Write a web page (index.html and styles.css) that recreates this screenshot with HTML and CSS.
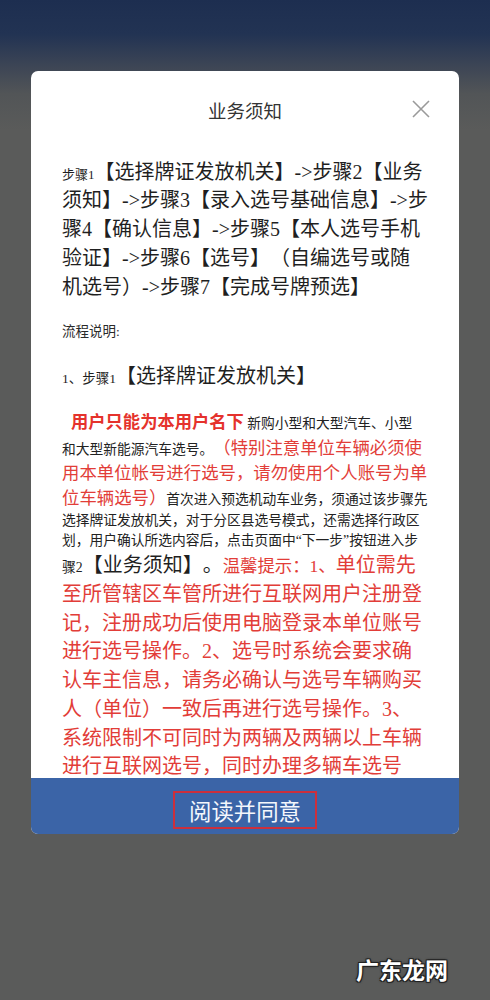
FILE: index.html
```html
<!DOCTYPE html>
<html lang="zh-CN">
<head>
<meta charset="utf-8">
<title>业务须知</title>
<link rel="stylesheet" href="styles.css">
</head>
<body>
<div class="screen">
  <section class="modal">
    <header class="modal-head">
      <h2 class="modal-title">业务须知</h2>
      <button class="close" aria-label="关闭">
        <svg viewBox="0 0 20 20" width="20" height="20"><path d="M2 2 L18 18 M18 2 L2 18" /></svg>
      </button>
    </header>
    <div class="modal-body">
      <p class="steps"><span class="sm">步骤1</span>【选择牌证发放机关】-&gt;步骤2【业务<br>须知】-&gt;步骤3【录入选号基础信息】-&gt;步<br>骤4【确认信息】-&gt;步骤5【本人选号手机<br>验证】-&gt;步骤6【选号】（自编选号或随<br>机选号）-&gt;步骤7【完成号牌预选】</p>
      <p class="note">流程说明:</p>
      <p class="step-title"><span class="sm">1、步骤1</span>【选择牌证发放机关】</p>
      <p class="detail"><b class="hl">用户只能为本用户名下</b> 新购小型和大型汽车、小型<br>和大型新能源汽车选号。<span class="red-m">（特别注意单位车辆必须使<br>用本单位帐号进行选号，请勿使用个人账号为单<br>位车辆选号）</span>首次进入预选机动车业务，须通过该步骤先<br>选择牌证发放机关，对于分区县选号模式，还需选择行政区<br>划，用户确认所选内容后，点击页面中“下一步”按钮进入步<br>骤2<span class="blk-l">【业务须知】。</span><span class="red-m">温馨提示：1、</span><span class="red-l">单位需先<br>至所管辖区车管所进行互联网用户注册登<br>记，注册成功后使用电脑登录本单位账号<br>进行选号操作。2、选号时系统会要求确<br>认车主信息，请务必确认与选号车辆购买<br>人（单位）一致后再进行选号操作。3、<br>系统限制不可同时为两辆及两辆以上车辆<br>进行互联网选号，同时办理多辆车选号</span></p>
    </div>
    <footer class="modal-foot">
      <button class="agree">阅读并同意</button>
    </footer>
  </section>
</div>
<div class="watermark">广东龙网</div>
</body>
</html>
```
FILE: styles.css
```css
* { box-sizing: border-box; }

html, body {
  margin: 0;
  padding: 0;
}

body {
  width: 490px;
  height: 1000px;
  overflow: hidden;
  position: relative;
  font-family: "Liberation Serif", "Noto Sans CJK SC", serif;
  background: linear-gradient(180deg, #1d2e50 0px, #223353 34px, #3b4455 64px, #525557 94px, #5a5b5a 130px, #5a5b5a 1000px);
  text-spacing-trim: space-all;
}

.screen {
  padding-top: 71px;
}

.modal {
  margin: 0 31px;
  height: 763px;
  background: #fff;
  border-radius: 7px;
  overflow: hidden;
  display: flex;
  flex-direction: column;
}

.modal-head {
  flex: none;
  height: 78px;
  display: grid;
  grid-template-columns: 1fr auto 1fr;
  align-items: center;
  padding-right: 28px;
  padding-left: 28px;
}

.modal-title {
  grid-column: 2;
  margin: 0;
  font-family: "Noto Sans CJK SC", sans-serif;
  font-weight: 400;
  font-size: 18.5px;
  line-height: 1;
  color: #333;
}

.close {
  grid-column: 3;
  justify-self: end;
  width: 20px;
  height: 20px;
  margin-top: -2px;
  padding: 0;
  border: 0;
  background: none;
  display: flex;
}

.close svg path {
  stroke: #9a9a9a;
  stroke-width: 1.6;
  fill: none;
}

.modal-body {
  flex: 1;
  overflow: hidden;
  padding: 8.5px 22px 0 31px;
  color: #1f1f1f;
}

.modal-body p {
  margin: 0 0 20.5px;
  line-height: 1.44;
  white-space: nowrap;
}

.steps,
.step-title {
  font-size: 20px;
}

.steps .sm {
  font-size: 13px;
}

.step-title .sm {
  font-size: 13.5px;
}

.note {
  font-size: 13.5px;
  color: #2a2a2a;
}

.detail {
  font-size: 13.75px;
  color: #222;
  text-indent: 9px;
}

.hl {
  font-size: 17.3px;
  font-weight: 700;
  color: #e5322c;
}

.red-m {
  font-size: 17.4px;
  color: #e23d38;
}

.red-l {
  font-size: 20px;
  color: #e23d38;
}

.blk-l {
  font-size: 20px;
  color: #1f1f1f;
}

.modal-foot {
  flex: none;
  height: 56px;
  background: #3b64a7;
  display: flex;
  justify-content: center;
  align-items: flex-start;
  padding-top: 13px;
}

.agree {
  height: 38px;
  padding: 0 14px;
  border: 2px solid #cc2f3c;
  background: transparent;
  color: #f4f7fc;
  font-family: "Noto Sans CJK SC", sans-serif;
  font-size: 22.4px;
  line-height: 34px;
}

.watermark {
  position: absolute;
  left: 356px;
  top: 954px;
  font-family: "Noto Sans CJK SC", sans-serif;
  font-weight: 700;
  font-size: 23px;
  line-height: 30px;
  color: #fff;
  text-shadow: 1px 1px 0 #222, -1px -1px 0 #222, 1px -1px 0 #222, -1px 1px 0 #222, 0 0 3px #000;
}
```
